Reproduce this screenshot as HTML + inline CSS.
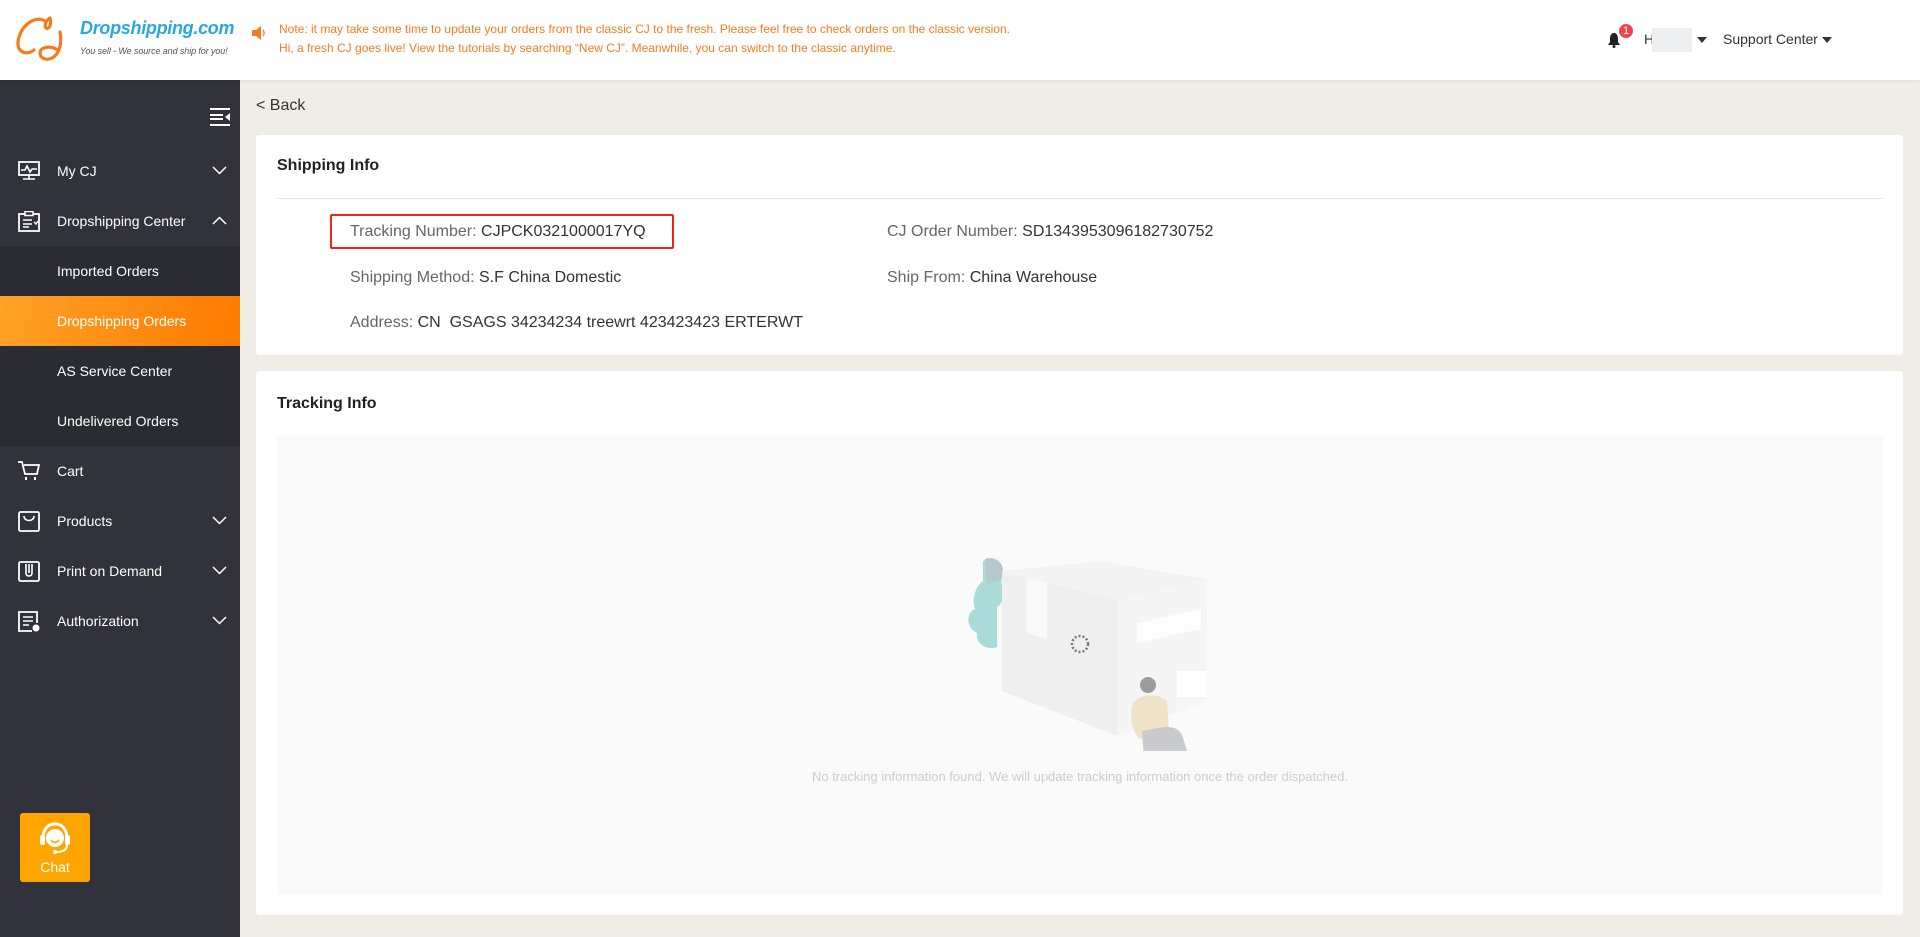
<!DOCTYPE html>
<html><head><meta charset="utf-8"><style>
*{margin:0;padding:0;box-sizing:border-box}
body{width:1920px;height:937px;overflow:hidden;background:#f0ede6;font-family:"Liberation Sans",Arial,sans-serif;position:relative}
.hdr{position:absolute;left:0;top:0;width:1920px;height:80px;background:#fff;box-shadow:0 1px 4px rgba(0,0,0,.08);z-index:2}
.side{position:absolute;left:0;top:80px;width:240px;height:857px;background:#31323b}
.item{position:absolute;left:0;width:240px;height:50px;color:#fff;font-size:14px;line-height:50px;padding-left:57px}
.sub{background:#2b2c33}
.act{background:linear-gradient(100deg,#ffa228,#ff7a00)}
.ico{position:absolute;left:18px;top:15px}
.chev{position:absolute;left:212px;top:20px}
.card{position:absolute;left:256px;width:1647px;background:#fff;border-radius:3px}
.t{position:absolute;font-size:16px;color:#333;white-space:nowrap}
.t span{color:#666}
</style></head><body>
<div class="hdr">
 <svg style="position:absolute;left:14px;top:14px" width="66" height="50" viewBox="0 0 66 50"><path d="M32 8C24 0 6 10 4 28c-1 10 8 14 16 8M36 4c-4 2-6 8-4 10 3 2 6-4 4-10M46 18c2 10 0 22-8 26-6 3-12 0-12-5 0-6 10-8 18-3" fill="none" stroke="#f47c20" stroke-width="3.2" stroke-linecap="round"/></svg>
 <div style="position:absolute;left:80px;top:18px;font-size:18px;font-weight:bold;font-style:italic;color:#29a8e0;letter-spacing:-0.3px">Dropshipping.com</div>
 <div style="position:absolute;left:80px;top:46px;font-size:9px;font-style:italic;color:#555;letter-spacing:-0.1px">You sell - We source and ship for you!</div>
 <svg style="position:absolute;left:251px;top:25px" width="16" height="16" viewBox="0 0 16 16"><path d="M1 5h4l5-4v14l-5-4H1z" fill="#f47c20"/><path d="M12 5c1.5 1.5 1.5 4.5 0 6" stroke="#f47c20" fill="none" stroke-width="1.3"/></svg>
 <div style="position:absolute;left:279px;top:20px;font-size:12px;line-height:19px;color:#f47c20">Note: it may take some time to update your orders from the classic CJ to the fresh. Please feel free to check orders on the classic version.<br>Hi, a fresh CJ goes live! View the tutorials by searching “New CJ”. Meanwhile, you can switch to the classic anytime.</div>
 <svg style="position:absolute;left:1607px;top:32px" width="14" height="16" viewBox="0 0 14 16"><path d="M7 1C4 1 3 4 3 7v3l-2 3h12l-2-3V7c0-3-1-6-4-6z" fill="#222"/><circle cx="7" cy="14.5" r="1.5" fill="#222"/></svg>
 <div style="position:absolute;left:1619px;top:24px;width:14px;height:14px;border-radius:7px;background:#f0434b;color:#fff;font-size:11px;line-height:14px;text-align:center">1</div>
 <div style="position:absolute;left:1644px;top:31px;font-size:14px;color:#333">H</div>
 <div style="position:absolute;left:1652px;top:28px;width:40px;height:24px;background:#eceef0"></div>
 <div style="position:absolute;left:1697px;top:37px;border:5px solid transparent;border-top:6px solid #333"></div>
 <div style="position:absolute;left:1723px;top:31px;font-size:14px;color:#333">Support Center</div>
 <div style="position:absolute;left:1822px;top:37px;border:5px solid transparent;border-top:6px solid #333"></div>
</div>
<div class="side">
 <svg style="position:absolute;left:210px;top:28px" width="20" height="18" viewBox="0 0 20 18"><path d="M0 1h20M0 7h13M0 11h13M0 17h20" stroke="#fff" stroke-width="2"/><path d="M20 5v8l-5-4z" fill="#fff"/></svg>
 <div class="item" style="top:66px"><svg class="ico" width="22" height="20" viewBox="0 0 22 20"><rect x="1" y="1" width="20" height="13" fill="none" stroke="#fff" stroke-width="1.8"/><path d="M3 9l4 0 2-4 3 6 2-3h5M11 14v4M5 18h12" fill="none" stroke="#fff" stroke-width="1.6"/></svg>My CJ<svg class="chev" width="15" height="9" viewBox="0 0 15 9"><path d="M1 1l6.5 6.5L14 1" fill="none" stroke="#fff" stroke-width="1.5"/></svg></div>
 <div class="item" style="top:116px"><svg class="ico" width="22" height="21" viewBox="0 0 22 21"><rect x="1" y="3" width="20" height="17" fill="none" stroke="#fff" stroke-width="1.8"/><rect x="7" y="0.5" width="8" height="4" fill="#31323b" stroke="#fff" stroke-width="1.5"/><path d="M5 9h9M5 13h9M5 16h6M16 11l2 2 2-3" fill="none" stroke="#fff" stroke-width="1.5"/></svg>Dropshipping Center<svg class="chev" width="15" height="9" viewBox="0 0 15 9"><path d="M1 8l6.5-6.5L14 8" fill="none" stroke="#fff" stroke-width="1.5"/></svg></div>
 <div class="item sub" style="top:166px">Imported Orders</div>
 <div class="item act" style="top:216px">Dropshipping Orders</div>
 <div class="item sub" style="top:266px">AS Service Center</div>
 <div class="item sub" style="top:316px">Undelivered Orders</div>
 <div class="item" style="top:366px"><svg class="ico" width="22" height="20" viewBox="0 0 22 20"><path d="M0 1h4l3 12h12l2-9H6" fill="none" stroke="#fff" stroke-width="1.8"/><path d="M8 16v3M17 16v3" stroke="#fff" stroke-width="2"/></svg>Cart</div>
 <div class="item" style="top:416px"><svg class="ico" width="22" height="21" viewBox="0 0 22 21"><rect x="1" y="1" width="20" height="19" rx="1.5" fill="none" stroke="#fff" stroke-width="1.8"/><path d="M6 5c0 6 10 6 10 0" fill="none" stroke="#fff" stroke-width="1.6"/></svg>Products<svg class="chev" width="15" height="9" viewBox="0 0 15 9"><path d="M1 1l6.5 6.5L14 1" fill="none" stroke="#fff" stroke-width="1.5"/></svg></div>
 <div class="item" style="top:466px"><svg class="ico" width="22" height="21" viewBox="0 0 22 21"><rect x="1" y="1" width="20" height="19" rx="1.5" fill="none" stroke="#fff" stroke-width="1.8"/><path d="M8 3v9c0 4 6 4 6 0V3M11 3v9" fill="none" stroke="#fff" stroke-width="1.6"/></svg>Print on Demand<svg class="chev" width="15" height="9" viewBox="0 0 15 9"><path d="M1 1l6.5 6.5L14 1" fill="none" stroke="#fff" stroke-width="1.5"/></svg></div>
 <div class="item" style="top:516px"><svg class="ico" width="23" height="22" viewBox="0 0 23 22"><path d="M14 20H1V1h18v11" fill="none" stroke="#fff" stroke-width="1.8"/><path d="M5 6h10M5 10h10M5 14h6" stroke="#fff" stroke-width="1.6"/><circle cx="18" cy="17" r="3.5" fill="#fff"/></svg>Authorization<svg class="chev" width="15" height="9" viewBox="0 0 15 9"><path d="M1 1l6.5 6.5L14 1" fill="none" stroke="#fff" stroke-width="1.5"/></svg></div>
 <div style="position:absolute;left:20px;top:733px;width:70px;height:69px;background:#ffa500;border-radius:3px">
  <svg style="position:absolute;left:19px;top:8px" width="32" height="34" viewBox="0 0 32 34"><path d="M4 18C4 8 9 3 16 3s12 5 12 15" fill="none" stroke="#fff" stroke-width="3"/><rect x="1" y="14" width="5" height="10" rx="2" fill="#fff"/><rect x="26" y="14" width="5" height="10" rx="2" fill="#fff"/><circle cx="16" cy="17" r="9" fill="#fff"/><path d="M12 19c2 3 6 3 8 0" stroke="#ffa500" stroke-width="1.6" fill="none"/><path d="M28 24c0 5-5 7-10 7" stroke="#fff" stroke-width="2" fill="none"/><circle cx="16" cy="31" r="2.2" fill="#fff"/></svg>
  <div style="position:absolute;left:0;top:46px;width:70px;text-align:center;color:#fff;font-size:14px">Chat</div>
 </div>
</div>
<div style="position:absolute;left:256px;top:97px;font-size:16px;color:#333">&lt; Back</div>
<div class="card" style="top:135px;height:220px">
 <div style="position:absolute;left:21px;top:22px;font-size:16px;font-weight:bold;color:#222">Shipping Info</div>
 <div style="position:absolute;left:21px;top:63px;width:1606px;height:1px;background:#e5e5e5"></div>
 <div style="position:absolute;left:74px;top:79px;width:344px;height:35px;border:2px solid #f0231b;border-radius:2px"></div>
 <div class="t" style="left:94px;top:88px"><span>Tracking Number:</span> CJPCK0321000017YQ</div>
 <div class="t" style="left:631px;top:88px"><span>CJ Order Number:</span> SD1343953096182730752</div>
 <div class="t" style="left:94px;top:134px"><span>Shipping Method:</span> S.F China Domestic</div>
 <div class="t" style="left:631px;top:134px"><span>Ship From:</span> China Warehouse</div>
 <div class="t" style="left:94px;top:179px"><span>Address:</span> CN&nbsp; GSAGS 34234234 treewrt 423423423 ERTERWT</div>
</div>
<div class="card" style="top:371px;height:544px">
 <div style="position:absolute;left:21px;top:24px;font-size:16px;font-weight:bold;color:#222">Tracking Info</div>
 <div style="position:absolute;left:21px;top:65px;width:1606px;height:459px;background:#fafafa">
  <svg style="position:absolute;left:680px;top:115px" width="260" height="200" viewBox="0 0 260 200">
   <path d="M26 10c12-4 22 6 18 22 8 8 2 20-4 24v40c-10 4-22-4-20-14-10-4-12-20-2-24-4-12 2-24 8-28z" fill="#a9dcd8"/>
   <path d="M28 8c10-4 20 4 18 16-4 10-10 4-16 10z" fill="#b4c9cc"/>
   <path d="M45 20l100-10 105 18-90 22z" fill="#f3f3f3"/>
   <path d="M45 20l115 30v135L45 140z" fill="#efefef"/>
   <path d="M160 50l90-22v122l-90 35z" fill="#f5f5f5"/>
   <path d="M70 27l20 5v56l-20-6z" fill="#f9f9f9"/>
   <path d="M180 72l64-14v20l-64 14z" fill="#fdfdfd"/>
   <circle cx="123" cy="93" r="8" fill="none" stroke="#777" stroke-width="2.5" stroke-dasharray="2 2"/>
   <rect x="220" y="120" width="30" height="26" fill="#fff"/>
   <circle cx="191" cy="134" r="8" fill="#9a9da0"/>
   <path d="M176 152c8-10 26-10 34-2l2 30-30 8c-8-10-10-24-6-36z" fill="#efe4c8"/>
   <path d="M185 180c20-4 34-8 40 4l12 38-6 2-14-24-30 8z" fill="#c8cacd"/>
   <path d="M226 208l14 6-8 6z" fill="#b8bde8"/>
  </svg>
  <div style="position:absolute;left:0;top:333px;width:1606px;text-align:center;font-size:13px;color:#ccc">No tracking information found. We will update tracking information once the order dispatched.</div>
 </div>
</div>
</body></html>
